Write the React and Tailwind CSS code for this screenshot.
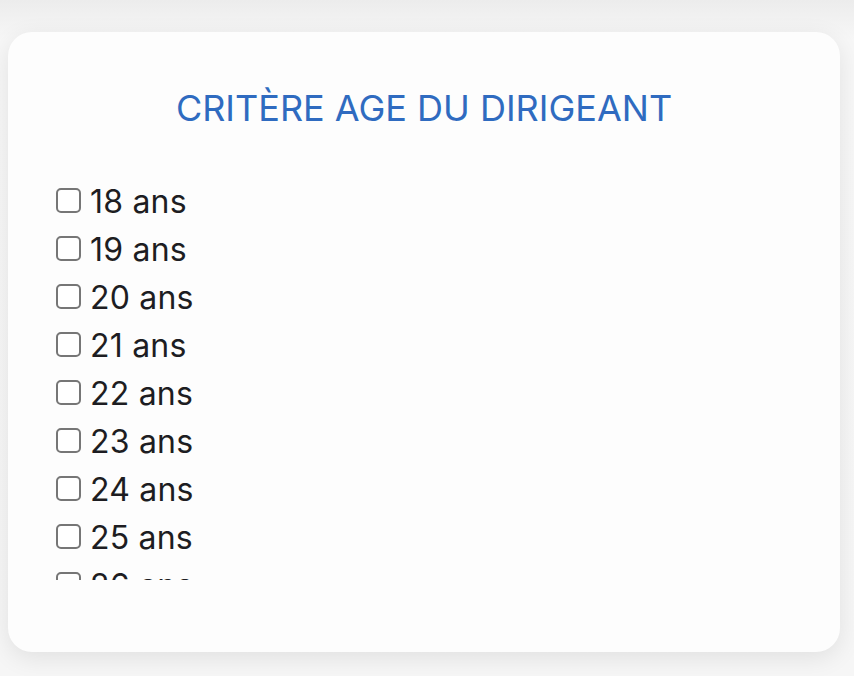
import React from 'react';

const ages = Array.from({ length: 12 }, (_, i) => 18 + i);

const App = () => {
  return (
    <div className="min-h-[676px] w-[854px] bg-[#f6f6f6] bg-[linear-gradient(to_bottom,#ececec,#f7f7f7_40px,#f6f6f6)] pt-8 px-2 font-['Inter',sans-serif]">
      <div className="h-[620px] w-[832px] rounded-[24px] bg-[#fdfdfd] shadow-[0_6px_24px_rgba(0,0,0,0.09)] px-12 pt-[46px]">
        <h2 className="text-center text-[36px] leading-[60px] font-normal text-[#2f6bc0]">
          CRITÈRE AGE DU DIRIGEANT
        </h2>
        <div className="mt-[38px] h-[404px] overflow-hidden">
          {ages.map((a) => (
            <label key={a} className="flex h-12 items-center gap-[9px]">
              <span className="h-[25px] w-[25px] rounded-[5px] border-2 border-[#767676] bg-white" />
              <span className="pt-[4px] text-[32px] leading-none tracking-[0.2px] text-[#1d1d22]">{a} ans</span>
            </label>
          ))}
        </div>
      </div>
    </div>
  );
};

export default App;
